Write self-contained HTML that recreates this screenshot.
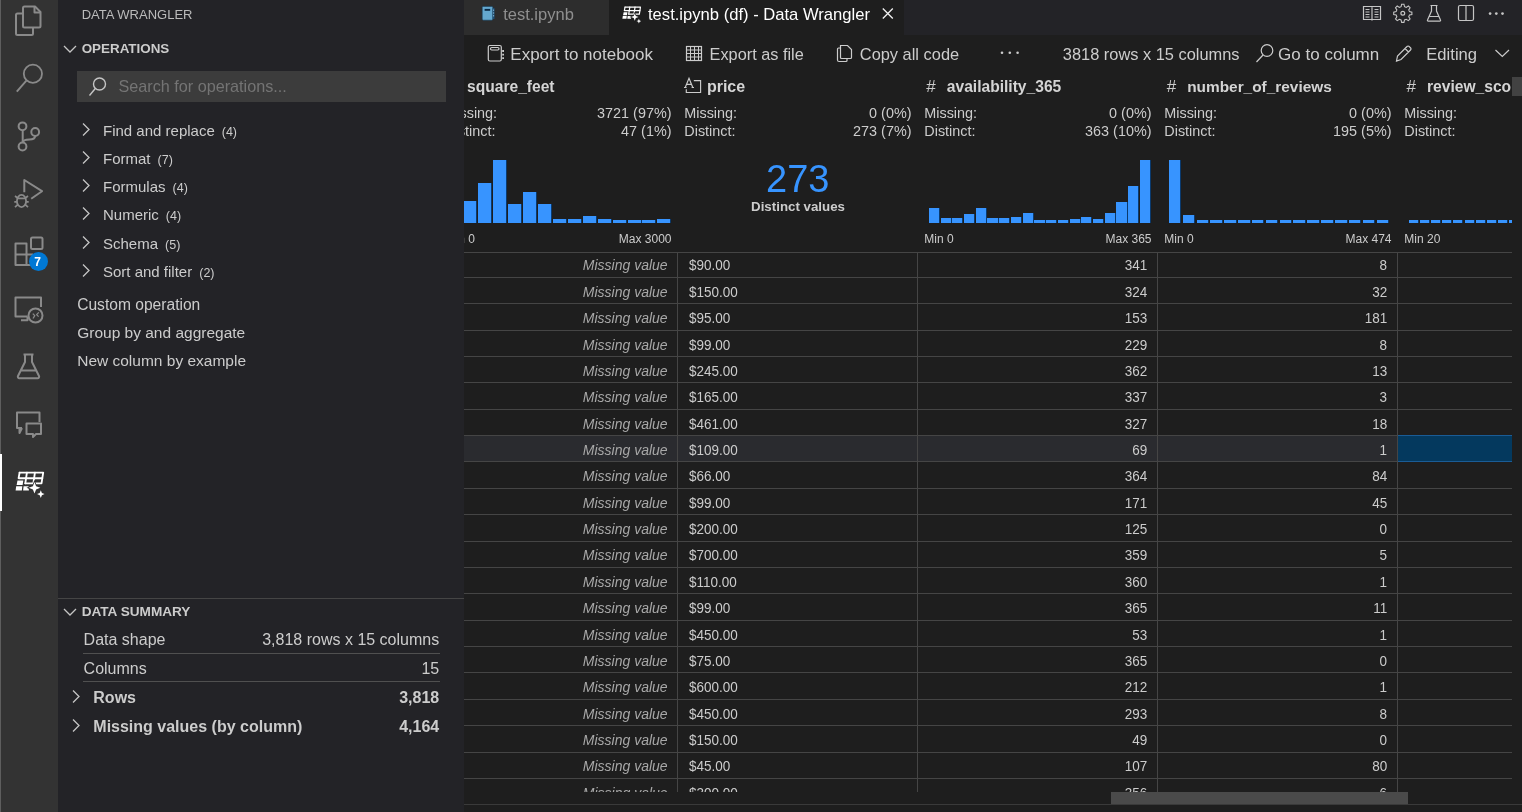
<!DOCTYPE html>
<html><head><meta charset="utf-8"><style>
html,body{margin:0;padding:0;will-change:transform;width:1522px;height:812px;overflow:hidden;background:#1e1e1e;}
.r{position:absolute;}
.t{position:absolute;white-space:nowrap;line-height:1.117;font-family:"Liberation Sans",sans-serif;}
</style></head><body>
<div class="r" style="left:0px;top:0px;width:58px;height:812px;background:#333333;"></div>
<div class="r" style="left:0px;top:0px;width:1px;height:812px;background:#5e5e5e;"></div>
<div class="r" style="left:58px;top:0px;width:406px;height:812px;background:#232327;"></div>
<div class="r" style="left:464px;top:0px;width:1058px;height:35px;background:#232327;"></div>
<div class="r" style="left:464px;top:35px;width:1058px;height:777px;background:#1e1e1e;"></div>
<svg class="r" style="left:0;top:0" width="58" height="560" viewBox="0 0 58 560" fill="none" stroke="#8a8a8a" stroke-width="2" stroke-linejoin="round">
<!-- explorer -->
<path d="M23 13.5 H17.5 a1.5 1.5 0 0 0 -1.5 1.5 V33.5 a1.5 1.5 0 0 0 1.5 1.5 H31.5 a1.5 1.5 0 0 0 1.5 -1.5 V27.5"/>
<path d="M24.5 6.5 H35 L40.5 12 V26 a1.5 1.5 0 0 1 -1.5 1.5 H24.5 a1.5 1.5 0 0 1 -1.5 -1.5 V8 a1.5 1.5 0 0 1 1.5 -1.5 Z"/>
<path d="M34.5 6.5 V12.5 H40.5"/>
<!-- search -->
<circle cx="32.9" cy="73.8" r="9.1" stroke-width="1.8"/>
<path d="M26.4 80.6 L16.8 91.6" stroke-width="1.9"/>
<!-- source control -->
<circle cx="22.5" cy="126.3" r="3.9"/>
<circle cx="35.2" cy="132" r="3.9"/>
<circle cx="22.5" cy="146.5" r="3.9"/>
<path d="M22.7 130.2 V142.6"/>
<path d="M35.2 135.9 C35 139 33 139.6 29.5 139.6 C25.5 139.6 23 140.2 22.7 142.6"/>
<!-- run & debug -->
<path d="M24.3 192.3 V180 L42 191.2 L31.2 198.8"/>
<ellipse cx="21.5" cy="201" rx="4.6" ry="6.1" stroke-width="1.8"/>
<path d="M17 198.3 H26 M15 196 L17.6 198 M28 196 L25.4 198 M14.3 201.8 H16.9 M26.1 201.8 H28.7 M15 207.2 L17.8 204.6 M28 207.2 L25.2 204.6" stroke-width="1.7"/>
<!-- extensions -->
<path d="M15.5 243.5 H26.5 V265 H15.5 Z M15.5 254.5 H33 M26.5 254.5 V265 H33"/>
<rect x="31" y="237.5" width="11.5" height="11.5" rx="1.5"/>
<!-- remote explorer -->
<path d="M27.5 316.6 H15.5 V297.5 H41 V307"/>
<path d="M21 320.3 H27.5 V316.6"/>
<circle cx="35.5" cy="315.5" r="7"/>
<path d="M32.8 313.6 L34.8 315.6 L33 318.5 M38.8 312.4 L36.6 314.6 L38.6 316.6" stroke-width="1.3"/>
<!-- testing flask -->
<path d="M23.5 354.5 H33.5 M25 354.5 V362 L18 376 a1.5 1.5 0 0 0 1.3 2.2 H37.7 a1.5 1.5 0 0 0 1.3 -2.2 L32 362 V354.5 M21 370.5 H36"/>
<!-- chat -->
<path d="M22 428 H17 V412.5 H39.5 V422 M19.5 428 V433 L22 428"/>
<path d="M26.5 423.5 H41 V434 H36 L33 437 V434 H26.5 Z"/>
</svg>
<div class="r" style="left:29px;top:252px;width:19px;height:19px;border-radius:50%;background:#0078d4;"></div>
<div class="t" style="left:34.30px;top:256px;font-size:12px;color:#ffffff;font-weight:700;font-style:normal;">7</div>
<div class="r" style="left:0px;top:454px;width:2px;height:57px;background:#ffffff;"></div>
<svg class="r" style="left:14.5px;top:470.5px" width="30.00" height="28.00" viewBox="0 0 30 28">
<g fill="none" stroke="#ffffff" stroke-width="1.85" stroke-linejoin="round" stroke-linecap="round">
<path d="M4.6 1.6 H28.2 L26.5 12.3 H10.3"/>
<path d="M4.6 1.6 L3.6 7.2 H27.3"/>
<path d="M11.9 1.6 L10.3 12.3 M19.9 1.6 L18.4 12.3"/>
</g>
<g fill="#ffffff">
<path d="M2.5 9.4 H8.3 L7.6 14 H1.6 Z"/>
<path d="M1.2 15.2 H7.3 L6.8 19.6 H0.6 Z"/>
<path d="M8.6 15.2 H13.5 L13.9 19.6 H8.1 Z"/>
</g>
<g fill="#ffffff" stroke="#333333" stroke-width="1.6" paint-order="stroke">
<path d="M19.5 11 L21.1 15.2 L25.3 16.8 L21.1 18.4 L19.5 22.6 L17.9 18.4 L13.7 16.8 L17.9 15.2 Z"/>
<path d="M25.8 19.3 L26.9 22 L29.6 23.1 L26.9 24.2 L25.8 26.9 L24.7 24.2 L22 23.1 L24.7 22 Z"/>
</g></svg>
<div class="t" style="left:81.70px;top:8px;font-size:13px;color:#bbbbbb;font-weight:400;font-style:normal;">DATA WRANGLER</div>
<svg class="r" style="left:62px;top:43px" width="16" height="12" viewBox="0 0 16 12"><path d="M2 3 L8 9 L14 3" fill="none" stroke="#c5c5c5" stroke-width="1.3"/></svg>
<div class="t" style="left:81.70px;top:42px;font-size:13.4px;color:#cccccc;font-weight:700;font-style:normal;">OPERATIONS</div>
<div class="r" style="left:77px;top:71px;width:369px;height:31px;background:#3c3c3c;"></div>
<svg class="r" style="left:88px;top:76px" width="20" height="21" viewBox="0 0 20 21"><circle cx="11.5" cy="8" r="6" fill="none" stroke="#c5c5c5" stroke-width="1.4"/><path d="M7.3 12.5 L1.5 19.5" stroke="#c5c5c5" stroke-width="1.4"/></svg>
<div class="t" style="left:118.50px;top:77px;font-size:16.2px;color:#747474;font-weight:400;font-style:normal;">Search for operations...</div>
<svg class="r" style="left:80px;top:121.3px" width="12" height="16" viewBox="0 0 12 16"><path d="M3 2.5 L9 8.5 L3 14.5" fill="none" stroke="#c5c5c5" stroke-width="1.3"/></svg>
<div class="t" style="left:103px;top:123px;font-size:15px;color:#cccccc;">Find and replace<span style="font-size:12.5px;margin-left:7px">(4)</span></div>
<svg class="r" style="left:80px;top:149.2px" width="12" height="16" viewBox="0 0 12 16"><path d="M3 2.5 L9 8.5 L3 14.5" fill="none" stroke="#c5c5c5" stroke-width="1.3"/></svg>
<div class="t" style="left:103px;top:151px;font-size:15px;color:#cccccc;">Format<span style="font-size:12.5px;margin-left:7px">(7)</span></div>
<svg class="r" style="left:80px;top:177.2px" width="12" height="16" viewBox="0 0 12 16"><path d="M3 2.5 L9 8.5 L3 14.5" fill="none" stroke="#c5c5c5" stroke-width="1.3"/></svg>
<div class="t" style="left:103px;top:179px;font-size:15px;color:#cccccc;">Formulas<span style="font-size:12.5px;margin-left:7px">(4)</span></div>
<svg class="r" style="left:80px;top:205.4px" width="12" height="16" viewBox="0 0 12 16"><path d="M3 2.5 L9 8.5 L3 14.5" fill="none" stroke="#c5c5c5" stroke-width="1.3"/></svg>
<div class="t" style="left:103px;top:207px;font-size:15px;color:#cccccc;">Numeric<span style="font-size:12.5px;margin-left:7px">(4)</span></div>
<svg class="r" style="left:80px;top:233.6px" width="12" height="16" viewBox="0 0 12 16"><path d="M3 2.5 L9 8.5 L3 14.5" fill="none" stroke="#c5c5c5" stroke-width="1.3"/></svg>
<div class="t" style="left:103px;top:236px;font-size:15px;color:#cccccc;">Schema<span style="font-size:12.5px;margin-left:7px">(5)</span></div>
<svg class="r" style="left:80px;top:262.2px" width="12" height="16" viewBox="0 0 12 16"><path d="M3 2.5 L9 8.5 L3 14.5" fill="none" stroke="#c5c5c5" stroke-width="1.3"/></svg>
<div class="t" style="left:103px;top:264px;font-size:15px;color:#cccccc;">Sort and filter<span style="font-size:12.5px;margin-left:7px">(2)</span></div>
<div class="t" style="left:77.20px;top:296px;font-size:15.6px;color:#cccccc;font-weight:400;font-style:normal;">Custom operation</div>
<div class="t" style="left:77.20px;top:324px;font-size:15.5px;color:#cccccc;font-weight:400;font-style:normal;">Group by and aggregate</div>
<div class="t" style="left:77.20px;top:352px;font-size:15.5px;color:#cccccc;font-weight:400;font-style:normal;">New column by example</div>
<div class="r" style="left:58px;top:598px;width:406px;height:1px;background:#454545;"></div>
<svg class="r" style="left:62px;top:606px" width="16" height="12" viewBox="0 0 16 12"><path d="M2 3 L8 9 L14 3" fill="none" stroke="#c5c5c5" stroke-width="1.3"/></svg>
<div class="t" style="left:81.70px;top:604px;font-size:13.6px;color:#cccccc;font-weight:700;font-style:normal;">DATA SUMMARY</div>
<div class="t" style="left:83.60px;top:631px;font-size:16px;color:#cccccc;font-weight:400;font-style:normal;">Data shape</div>
<div class="t" style="right:1082.80px;top:631px;font-size:16px;color:#cccccc;font-weight:400;font-style:normal;">3,818 rows x 15 columns</div>
<div class="r" style="left:83px;top:653px;width:357px;height:1px;background:#505050;"></div>
<div class="t" style="left:83.60px;top:660px;font-size:16px;color:#cccccc;font-weight:400;font-style:normal;">Columns</div>
<div class="t" style="right:1082.80px;top:660px;font-size:16px;color:#cccccc;font-weight:400;font-style:normal;">15</div>
<div class="r" style="left:83px;top:681px;width:357px;height:1px;background:#505050;"></div>
<svg class="r" style="left:70px;top:688.0px" width="12" height="16" viewBox="0 0 12 16"><path d="M3 2.5 L9 8.5 L3 14.5" fill="none" stroke="#c5c5c5" stroke-width="1.3"/></svg>
<div class="t" style="left:93.30px;top:689px;font-size:16px;color:#cccccc;font-weight:700;font-style:normal;">Rows</div>
<div class="t" style="right:1082.80px;top:689px;font-size:16px;color:#cccccc;font-weight:700;font-style:normal;">3,818</div>
<svg class="r" style="left:70px;top:716.5px" width="12" height="16" viewBox="0 0 12 16"><path d="M3 2.5 L9 8.5 L3 14.5" fill="none" stroke="#c5c5c5" stroke-width="1.3"/></svg>
<div class="t" style="left:93.30px;top:718px;font-size:16px;color:#cccccc;font-weight:700;font-style:normal;">Missing values (by column)</div>
<div class="t" style="right:1082.80px;top:718px;font-size:16px;color:#cccccc;font-weight:700;font-style:normal;">4,164</div>
<div class="r" style="left:464px;top:0px;width:145px;height:35px;background:#2d2d2d;"></div>
<div class="r" style="left:609px;top:0px;width:295px;height:35px;background:#1e1e1e;"></div>
<svg class="r" style="left:480px;top:4px" width="18" height="19" viewBox="480 4 18 19"><rect x="482.2" y="6.4" width="10.6" height="13.8" rx="1.2" fill="#64a8cf" stroke="#143a58" stroke-width="0.6"/><rect x="484.6" y="8.9" width="5.6" height="1.9" fill="#0b2a45"/><rect x="492.8" y="8" width="1.7" height="11" fill="#1d4e74"/><path d="M493.6 9.6 V10.8 M493.6 12.4 V13.6 M493.6 15.2 V16.4" stroke="#8fc3e0" stroke-width="1"/></svg>
<div class="t" style="left:503.20px;top:5px;font-size:16.5px;color:#8f8f8f;font-weight:400;font-style:normal;">test.ipynb</div>
<svg class="r" style="left:621.8px;top:5.6px" width="19.65" height="18.34" viewBox="0 0 30 28">
<g fill="none" stroke="#ffffff" stroke-width="1.85" stroke-linejoin="round" stroke-linecap="round">
<path d="M4.6 1.6 H28.2 L26.5 12.3 H10.3"/>
<path d="M4.6 1.6 L3.6 7.2 H27.3"/>
<path d="M11.9 1.6 L10.3 12.3 M19.9 1.6 L18.4 12.3"/>
</g>
<g fill="#ffffff">
<path d="M2.5 9.4 H8.3 L7.6 14 H1.6 Z"/>
<path d="M1.2 15.2 H7.3 L6.8 19.6 H0.6 Z"/>
<path d="M8.6 15.2 H13.5 L13.9 19.6 H8.1 Z"/>
</g>
<g fill="#ffffff" stroke="#1e1e1e" stroke-width="1.6" paint-order="stroke">
<path d="M19.5 11 L21.1 15.2 L25.3 16.8 L21.1 18.4 L19.5 22.6 L17.9 18.4 L13.7 16.8 L17.9 15.2 Z"/>
<path d="M25.8 19.3 L26.9 22 L29.6 23.1 L26.9 24.2 L25.8 26.9 L24.7 24.2 L22 23.1 L24.7 22 Z"/>
</g></svg>
<div class="t" style="left:648.00px;top:6px;font-size:16.6px;color:#ffffff;font-weight:400;font-style:normal;">test.ipynb (df) - Data Wrangler</div>
<svg class="r" style="left:881px;top:7px" width="13" height="13" viewBox="0 0 13 13"><path d="M1.8 1.5 L11.8 11.5 M11.8 1.5 L1.8 11.5" stroke="#f0f0f0" stroke-width="1.3"/></svg>
<svg class="r" style="left:1360px;top:3px" width="150" height="22" viewBox="1360 3 150 22" fill="none" stroke="#c5c5c5" stroke-width="1.2">
<path d="M1363.5 6.5 H1371.5 L1372 7 L1372.5 6.5 H1380.5 V19.5 H1372.5 L1372 20 L1371.5 19.5 H1363.5 Z M1372 7 V19.5"/>
<path d="M1365.5 9.5 H1369.5 M1365.5 12 H1369.5 M1365.5 14.5 H1369.5 M1365.5 17 H1369.5 M1374.5 9.5 H1378.5 M1374.5 12 H1378.5 M1374.5 14.5 H1378.5 M1374.5 17 H1378.5" stroke-width="1"/>
<circle cx="1402.8" cy="13.3" r="1.9"/>
<path d="M1401.5 4.5 H1404.1 L1404.7 7.2 L1406.6 8 L1409 6.5 L1410.9 8.4 L1409.4 10.8 L1410.2 12.7 L1412.9 13.3 V15.9 L1410.2 16.5 L1409.4 18.4 L1410.9 20.8 L1409 22.7 L1406.6 21.2 L1404.7 22 L1404.1 24.7 H1401.5 L1400.9 22 L1399 21.2 L1396.6 22.7 L1394.7 20.8 L1396.2 18.4 L1395.4 16.5 L1392.7 15.9 V13.3 L1395.4 12.7 L1396.2 10.8 L1394.7 8.4 L1396.6 6.5 L1399 8 L1400.9 7.2 Z" transform="translate(1402.8 13.3) scale(0.9) translate(-1402.8 -14.6)"/>
<path d="M1430.5 5.5 H1437.5 M1431.5 5.5 V11 L1427.5 20 a0.8 0.8 0 0 0 0.7 1.2 H1439.8 a0.8 0.8 0 0 0 0.7 -1.2 L1436.5 11 V5.5 M1429.5 16.5 H1438.5"/>
<rect x="1458.5" y="5.5" width="15" height="15" rx="1.5"/>
<path d="M1466 5.5 V20.5"/>
</svg>
<svg class="r" style="left:1480px;top:5px" width="30" height="20" viewBox="1480 5 30 20" fill="#c5c5c5"><circle cx="1490.1" cy="13.6" r="1.35"/><circle cx="1496.3" cy="13.6" r="1.35"/><circle cx="1502.5" cy="13.6" r="1.35"/></svg>
<svg class="r" style="left:480px;top:40px" width="1050" height="30" viewBox="480 40 1050 30" fill="none" stroke="#cccccc" stroke-width="1.2">
<rect x="488.3" y="45.5" width="13" height="15.5" rx="1.5"/>
<rect x="490.5" y="47.5" width="8.5" height="2.5" rx="1.2"/>
<path d="M503.1 50.1 V51.9 M503.1 53.8 V55.6 M503.1 57.3 V59.1" stroke-width="1.8"/>
<rect x="686.5" y="46.5" width="15" height="14"/>
<path d="M686.5 50 H701.5 M686.5 53.5 H701.5 M686.5 57 H701.5 M690.5 46.5 V60.5 M694.5 46.5 V60.5 M698.5 46.5 V60.5" stroke-width="1"/>
<path d="M840.5 48 H838.5 a1 1 0 0 0 -1 1 V60 a1.5 1.5 0 0 0 1.5 1.5 H846 a1 1 0 0 0 1 -1 V59"/>
<path d="M840.5 45.5 H847.5 L851.5 49.5 V57.5 a1 1 0 0 1 -1 1 H841.5 a1 1 0 0 1 -1 -1 Z"/>
<circle cx="1267" cy="50.5" r="5.8"/>
<path d="M1263 55 L1256.5 62"/>
<path d="M1396.5 61 L1397.5 56 L1407 46.5 a1.5 1.5 0 0 1 2.2 0 L1410.5 47.8 a1.5 1.5 0 0 1 0 2.2 L1401 59.5 Z M1405 48.5 L1408.5 52"/>
<path d="M1495.5 50 L1502.3 56.5 L1509 50"/>
</svg>
<svg class="r" style="left:995px;top:45px" width="30" height="15" viewBox="995 45 30 15" fill="#cccccc"><circle cx="1002" cy="52.7" r="1.3"/><circle cx="1009.8" cy="52.7" r="1.3"/><circle cx="1017.6" cy="52.7" r="1.3"/></svg>
<div class="t" style="left:510.30px;top:45px;font-size:17px;color:#cccccc;font-weight:400;font-style:normal;">Export to notebook</div>
<div class="t" style="left:709.60px;top:45px;font-size:16.3px;color:#cccccc;font-weight:400;font-style:normal;">Export as file</div>
<div class="t" style="left:859.80px;top:45px;font-size:16.4px;color:#cccccc;font-weight:400;font-style:normal;">Copy all code</div>
<div class="t" style="left:1062.80px;top:45px;font-size:16.4px;color:#cccccc;font-weight:400;font-style:normal;">3818 rows x 15 columns</div>
<div class="t" style="left:1278.10px;top:45px;font-size:17px;color:#cccccc;font-weight:400;font-style:normal;">Go to column</div>
<div class="t" style="left:1426.30px;top:46px;font-size:16.6px;color:#cccccc;font-weight:400;font-style:normal;">Editing</div>
<div class="r" style="left:464px;top:70px;width:1058px;height:742px;overflow:hidden">
<div class="t" style="left:3.00px;top:8px;font-size:15.6px;color:#d4d4d4;font-weight:700;font-style:normal;">square_feet</div>
<div class="t" style="left:242.90px;top:8px;font-size:16px;color:#d4d4d4;font-weight:700;font-style:normal;">price</div>
<div class="t" style="left:482.80px;top:8px;font-size:15.6px;color:#d4d4d4;font-weight:700;font-style:normal;">availability_365</div>
<div class="t" style="left:723.20px;top:8px;font-size:15.4px;color:#d4d4d4;font-weight:700;font-style:normal;">number_of_reviews</div>
<div class="t" style="left:963.00px;top:8px;font-size:15.6px;color:#d4d4d4;font-weight:700;font-style:normal;">review_scores_rating</div>
<div class="t" style="left:462.30px;top:7px;font-size:17px;color:#cccccc;font-weight:400;font-style:normal;">#</div>
<div class="t" style="left:702.70px;top:7px;font-size:17px;color:#cccccc;font-weight:400;font-style:normal;">#</div>
<div class="t" style="left:942.40px;top:7px;font-size:17px;color:#cccccc;font-weight:400;font-style:normal;">#</div>
<svg class="r" style="left:216px;top:4px" width="24" height="22" viewBox="680 74 24 22" fill="none" stroke="#cccccc" stroke-width="1.15">
<path d="M685.2 87.5 L689 78.3 L692.8 87.5 M686.6 84.3 H691.4 M684 87.5 H686.6 M691.6 87.5 H694"/>
<path d="M693.8 80.6 H700.6 V92.5 H686.3 V89.3"/>
</svg>
<div class="t" style="left:-19.70px;top:35px;font-size:14.4px;color:#cccccc;font-weight:400;font-style:normal;">Missing:</div>
<div class="t" style="left:-19.70px;top:53px;font-size:14.4px;color:#cccccc;font-weight:400;font-style:normal;">Distinct:</div>
<div class="t" style="right:850.50px;top:35px;font-size:14.4px;color:#cccccc;font-weight:400;font-style:normal;">3721 (97%)</div>
<div class="t" style="right:850.50px;top:53px;font-size:14.4px;color:#cccccc;font-weight:400;font-style:normal;">47 (1%)</div>
<div class="t" style="left:220.30px;top:35px;font-size:14.4px;color:#cccccc;font-weight:400;font-style:normal;">Missing:</div>
<div class="t" style="left:220.30px;top:53px;font-size:14.4px;color:#cccccc;font-weight:400;font-style:normal;">Distinct:</div>
<div class="t" style="right:610.50px;top:35px;font-size:14.4px;color:#cccccc;font-weight:400;font-style:normal;">0 (0%)</div>
<div class="t" style="right:610.50px;top:53px;font-size:14.4px;color:#cccccc;font-weight:400;font-style:normal;">273 (7%)</div>
<div class="t" style="left:460.30px;top:35px;font-size:14.4px;color:#cccccc;font-weight:400;font-style:normal;">Missing:</div>
<div class="t" style="left:460.30px;top:53px;font-size:14.4px;color:#cccccc;font-weight:400;font-style:normal;">Distinct:</div>
<div class="t" style="right:370.50px;top:35px;font-size:14.4px;color:#cccccc;font-weight:400;font-style:normal;">0 (0%)</div>
<div class="t" style="right:370.50px;top:53px;font-size:14.4px;color:#cccccc;font-weight:400;font-style:normal;">363 (10%)</div>
<div class="t" style="left:700.30px;top:35px;font-size:14.4px;color:#cccccc;font-weight:400;font-style:normal;">Missing:</div>
<div class="t" style="left:700.30px;top:53px;font-size:14.4px;color:#cccccc;font-weight:400;font-style:normal;">Distinct:</div>
<div class="t" style="right:130.50px;top:35px;font-size:14.4px;color:#cccccc;font-weight:400;font-style:normal;">0 (0%)</div>
<div class="t" style="right:130.50px;top:53px;font-size:14.4px;color:#cccccc;font-weight:400;font-style:normal;">195 (5%)</div>
<div class="t" style="left:940.30px;top:35px;font-size:14.4px;color:#cccccc;font-weight:400;font-style:normal;">Missing:</div>
<div class="t" style="left:940.30px;top:53px;font-size:14.4px;color:#cccccc;font-weight:400;font-style:normal;">Distinct:</div>
<div class="t" style="left:333.80px;top:88px;font-size:38px;color:#3794ff;font-weight:400;font-style:normal;transform:translateX(-50%);">273</div>
<div class="t" style="left:334.00px;top:130px;font-size:13.3px;color:#cccccc;font-weight:700;font-style:normal;transform:translateX(-50%);">Distinct values</div>
<div class="t" style="left:-18.30px;top:163px;font-size:12px;color:#cccccc;font-weight:400;font-style:normal;">Min 0</div>
<div class="t" style="right:850.50px;top:163px;font-size:12px;color:#cccccc;font-weight:400;font-style:normal;">Max 3000</div>
<div class="t" style="left:460.30px;top:163px;font-size:12px;color:#cccccc;font-weight:400;font-style:normal;">Min 0</div>
<div class="t" style="right:370.50px;top:163px;font-size:12px;color:#cccccc;font-weight:400;font-style:normal;">Max 365</div>
<div class="t" style="left:700.30px;top:163px;font-size:12px;color:#cccccc;font-weight:400;font-style:normal;">Min 0</div>
<div class="t" style="right:130.50px;top:163px;font-size:12px;color:#cccccc;font-weight:400;font-style:normal;">Max 474</div>
<div class="t" style="left:940.30px;top:163px;font-size:12px;color:#cccccc;font-weight:400;font-style:normal;">Min 20</div>
<div class="r" style="left:-15.62px;top:149.40px;width:13.00px;height:3.90px;background:#3794ff;box-shadow:1px 0 0 #0a3a6e"></div>
<div class="r" style="left:-0.69px;top:131.30px;width:13.00px;height:22.00px;background:#3794ff;box-shadow:1px 0 0 #0a3a6e"></div>
<div class="r" style="left:14.24px;top:113.20px;width:13.00px;height:40.10px;background:#3794ff;box-shadow:1px 0 0 #0a3a6e"></div>
<div class="r" style="left:29.17px;top:90.10px;width:13.00px;height:63.20px;background:#3794ff;box-shadow:1px 0 0 #0a3a6e"></div>
<div class="r" style="left:44.10px;top:133.80px;width:13.00px;height:19.50px;background:#3794ff;box-shadow:1px 0 0 #0a3a6e"></div>
<div class="r" style="left:59.03px;top:121.90px;width:13.00px;height:31.40px;background:#3794ff;box-shadow:1px 0 0 #0a3a6e"></div>
<div class="r" style="left:73.96px;top:133.80px;width:13.00px;height:19.50px;background:#3794ff;box-shadow:1px 0 0 #0a3a6e"></div>
<div class="r" style="left:88.89px;top:149.40px;width:13.00px;height:3.90px;background:#3794ff;box-shadow:1px 0 0 #0a3a6e"></div>
<div class="r" style="left:103.82px;top:149.40px;width:13.00px;height:3.90px;background:#3794ff;box-shadow:1px 0 0 #0a3a6e"></div>
<div class="r" style="left:118.75px;top:145.80px;width:13.00px;height:7.50px;background:#3794ff;box-shadow:1px 0 0 #0a3a6e"></div>
<div class="r" style="left:133.68px;top:149.40px;width:13.00px;height:3.90px;background:#3794ff;box-shadow:1px 0 0 #0a3a6e"></div>
<div class="r" style="left:148.61px;top:150.10px;width:13.00px;height:3.20px;background:#3794ff;box-shadow:1px 0 0 #0a3a6e"></div>
<div class="r" style="left:163.54px;top:150.10px;width:13.00px;height:3.20px;background:#3794ff;box-shadow:1px 0 0 #0a3a6e"></div>
<div class="r" style="left:178.47px;top:150.10px;width:13.00px;height:3.20px;background:#3794ff;box-shadow:1px 0 0 #0a3a6e"></div>
<div class="r" style="left:193.40px;top:149.10px;width:13.00px;height:4.20px;background:#3794ff;box-shadow:1px 0 0 #0a3a6e"></div>
<div class="r" style="left:464.80px;top:138.30px;width:10.20px;height:15.00px;background:#3794ff;box-shadow:1px 0 0 #0a3a6e"></div>
<div class="r" style="left:476.53px;top:147.80px;width:10.20px;height:5.50px;background:#3794ff;box-shadow:1px 0 0 #0a3a6e"></div>
<div class="r" style="left:488.26px;top:147.80px;width:10.20px;height:5.50px;background:#3794ff;box-shadow:1px 0 0 #0a3a6e"></div>
<div class="r" style="left:499.99px;top:143.90px;width:10.20px;height:9.40px;background:#3794ff;box-shadow:1px 0 0 #0a3a6e"></div>
<div class="r" style="left:511.72px;top:138.30px;width:10.20px;height:15.00px;background:#3794ff;box-shadow:1px 0 0 #0a3a6e"></div>
<div class="r" style="left:523.45px;top:147.80px;width:10.20px;height:5.50px;background:#3794ff;box-shadow:1px 0 0 #0a3a6e"></div>
<div class="r" style="left:535.18px;top:147.80px;width:10.20px;height:5.50px;background:#3794ff;box-shadow:1px 0 0 #0a3a6e"></div>
<div class="r" style="left:546.91px;top:147.00px;width:10.20px;height:6.30px;background:#3794ff;box-shadow:1px 0 0 #0a3a6e"></div>
<div class="r" style="left:558.64px;top:143.10px;width:10.20px;height:10.20px;background:#3794ff;box-shadow:1px 0 0 #0a3a6e"></div>
<div class="r" style="left:570.37px;top:150.20px;width:10.20px;height:3.10px;background:#3794ff;box-shadow:1px 0 0 #0a3a6e"></div>
<div class="r" style="left:582.10px;top:150.20px;width:10.20px;height:3.10px;background:#3794ff;box-shadow:1px 0 0 #0a3a6e"></div>
<div class="r" style="left:593.83px;top:150.20px;width:10.20px;height:3.10px;background:#3794ff;box-shadow:1px 0 0 #0a3a6e"></div>
<div class="r" style="left:605.56px;top:149.10px;width:10.20px;height:4.20px;background:#3794ff;box-shadow:1px 0 0 #0a3a6e"></div>
<div class="r" style="left:617.29px;top:147.00px;width:10.20px;height:6.30px;background:#3794ff;box-shadow:1px 0 0 #0a3a6e"></div>
<div class="r" style="left:629.02px;top:149.10px;width:10.20px;height:4.20px;background:#3794ff;box-shadow:1px 0 0 #0a3a6e"></div>
<div class="r" style="left:640.75px;top:143.10px;width:10.20px;height:10.20px;background:#3794ff;box-shadow:1px 0 0 #0a3a6e"></div>
<div class="r" style="left:652.48px;top:132.30px;width:10.20px;height:21.00px;background:#3794ff;box-shadow:1px 0 0 #0a3a6e"></div>
<div class="r" style="left:664.21px;top:115.80px;width:10.20px;height:37.50px;background:#3794ff;box-shadow:1px 0 0 #0a3a6e"></div>
<div class="r" style="left:675.94px;top:90.20px;width:10.20px;height:63.10px;background:#3794ff;box-shadow:1px 0 0 #0a3a6e"></div>
<div class="r" style="left:704.80px;top:90.20px;width:11.50px;height:63.10px;background:#3794ff;box-shadow:1px 0 0 #0a3a6e"></div>
<div class="r" style="left:718.65px;top:145.40px;width:11.50px;height:7.90px;background:#3794ff;box-shadow:1px 0 0 #0a3a6e"></div>
<div class="r" style="left:732.50px;top:150.20px;width:11.50px;height:3.10px;background:#3794ff;box-shadow:1px 0 0 #0a3a6e"></div>
<div class="r" style="left:746.35px;top:150.20px;width:11.50px;height:3.10px;background:#3794ff;box-shadow:1px 0 0 #0a3a6e"></div>
<div class="r" style="left:760.20px;top:150.20px;width:11.50px;height:3.10px;background:#3794ff;box-shadow:1px 0 0 #0a3a6e"></div>
<div class="r" style="left:774.05px;top:150.20px;width:11.50px;height:3.10px;background:#3794ff;box-shadow:1px 0 0 #0a3a6e"></div>
<div class="r" style="left:787.90px;top:150.20px;width:11.50px;height:3.10px;background:#3794ff;box-shadow:1px 0 0 #0a3a6e"></div>
<div class="r" style="left:801.75px;top:150.20px;width:11.50px;height:3.10px;background:#3794ff;box-shadow:1px 0 0 #0a3a6e"></div>
<div class="r" style="left:815.60px;top:150.20px;width:11.50px;height:3.10px;background:#3794ff;box-shadow:1px 0 0 #0a3a6e"></div>
<div class="r" style="left:829.45px;top:150.20px;width:11.50px;height:3.10px;background:#3794ff;box-shadow:1px 0 0 #0a3a6e"></div>
<div class="r" style="left:843.30px;top:150.20px;width:11.50px;height:3.10px;background:#3794ff;box-shadow:1px 0 0 #0a3a6e"></div>
<div class="r" style="left:857.15px;top:150.20px;width:11.50px;height:3.10px;background:#3794ff;box-shadow:1px 0 0 #0a3a6e"></div>
<div class="r" style="left:871.00px;top:150.20px;width:11.50px;height:3.10px;background:#3794ff;box-shadow:1px 0 0 #0a3a6e"></div>
<div class="r" style="left:884.85px;top:150.20px;width:11.50px;height:3.10px;background:#3794ff;box-shadow:1px 0 0 #0a3a6e"></div>
<div class="r" style="left:898.70px;top:150.20px;width:11.50px;height:3.10px;background:#3794ff;box-shadow:1px 0 0 #0a3a6e"></div>
<div class="r" style="left:912.55px;top:150.20px;width:11.50px;height:3.10px;background:#3794ff;box-shadow:1px 0 0 #0a3a6e"></div>
<div class="r" style="left:945.00px;top:150.20px;width:9.00px;height:3.10px;background:#3794ff;box-shadow:1px 0 0 #0a3a6e"></div>
<div class="r" style="left:956.10px;top:150.20px;width:9.00px;height:3.10px;background:#3794ff;box-shadow:1px 0 0 #0a3a6e"></div>
<div class="r" style="left:967.20px;top:150.20px;width:9.00px;height:3.10px;background:#3794ff;box-shadow:1px 0 0 #0a3a6e"></div>
<div class="r" style="left:978.30px;top:150.20px;width:9.00px;height:3.10px;background:#3794ff;box-shadow:1px 0 0 #0a3a6e"></div>
<div class="r" style="left:989.40px;top:150.20px;width:9.00px;height:3.10px;background:#3794ff;box-shadow:1px 0 0 #0a3a6e"></div>
<div class="r" style="left:1000.50px;top:150.20px;width:9.00px;height:3.10px;background:#3794ff;box-shadow:1px 0 0 #0a3a6e"></div>
<div class="r" style="left:1011.60px;top:150.20px;width:9.00px;height:3.10px;background:#3794ff;box-shadow:1px 0 0 #0a3a6e"></div>
<div class="r" style="left:1022.70px;top:150.20px;width:9.00px;height:3.10px;background:#3794ff;box-shadow:1px 0 0 #0a3a6e"></div>
<div class="r" style="left:1033.80px;top:150.20px;width:9.00px;height:3.10px;background:#3794ff;box-shadow:1px 0 0 #0a3a6e"></div>
<div class="r" style="left:1044.90px;top:150.20px;width:9.00px;height:3.10px;background:#3794ff;box-shadow:1px 0 0 #0a3a6e"></div>
<div class="r" style="left:0.00px;top:182.00px;width:1048.00px;height:1.00px;background:#454545;"></div>
<div class="r" style="left:1048.00px;top:30.00px;width:10.00px;height:150.00px;background:#1e1e1e;"></div>
<div class="r" style="left:1048.00px;top:7.00px;width:10.00px;height:19.00px;background:#424242;"></div>
<div class="r" style="left:0;top:183px;width:1048px;height:539px;overflow:hidden">
<div class="t" style="right:844.40px;top:5px;font-size:14px;color:#a8a8a8;font-style:italic;">Missing value</div>
<div class="t" style="left:225.00px;top:4px;font-size:14.6px;color:#cccccc;font-style:normal;transform:scaleX(0.925);transform-origin:0 0;">$90.00</div>
<div class="t" style="right:364.50px;top:4px;font-size:14.6px;color:#cccccc;font-style:normal;transform:scaleX(0.925);transform-origin:100% 0;">341</div>
<div class="t" style="right:124.50px;top:4px;font-size:14.6px;color:#cccccc;font-style:normal;transform:scaleX(0.925);transform-origin:100% 0;">8</div>
<div class="r" style="left:0.00px;top:24.00px;width:1048.00px;height:1.00px;background:#454545;"></div>
<div class="t" style="right:844.40px;top:32px;font-size:14px;color:#a8a8a8;font-style:italic;">Missing value</div>
<div class="t" style="left:225.00px;top:31px;font-size:14.6px;color:#cccccc;font-style:normal;transform:scaleX(0.925);transform-origin:0 0;">$150.00</div>
<div class="t" style="right:364.50px;top:31px;font-size:14.6px;color:#cccccc;font-style:normal;transform:scaleX(0.925);transform-origin:100% 0;">324</div>
<div class="t" style="right:124.50px;top:31px;font-size:14.6px;color:#cccccc;font-style:normal;transform:scaleX(0.925);transform-origin:100% 0;">32</div>
<div class="r" style="left:0.00px;top:50.00px;width:1048.00px;height:1.00px;background:#454545;"></div>
<div class="t" style="right:844.40px;top:58px;font-size:14px;color:#a8a8a8;font-style:italic;">Missing value</div>
<div class="t" style="left:225.00px;top:57px;font-size:14.6px;color:#cccccc;font-style:normal;transform:scaleX(0.925);transform-origin:0 0;">$95.00</div>
<div class="t" style="right:364.50px;top:57px;font-size:14.6px;color:#cccccc;font-style:normal;transform:scaleX(0.925);transform-origin:100% 0;">153</div>
<div class="t" style="right:124.50px;top:57px;font-size:14.6px;color:#cccccc;font-style:normal;transform:scaleX(0.925);transform-origin:100% 0;">181</div>
<div class="r" style="left:0.00px;top:77.00px;width:1048.00px;height:1.00px;background:#454545;"></div>
<div class="t" style="right:844.40px;top:85px;font-size:14px;color:#a8a8a8;font-style:italic;">Missing value</div>
<div class="t" style="left:225.00px;top:84px;font-size:14.6px;color:#cccccc;font-style:normal;transform:scaleX(0.925);transform-origin:0 0;">$99.00</div>
<div class="t" style="right:364.50px;top:84px;font-size:14.6px;color:#cccccc;font-style:normal;transform:scaleX(0.925);transform-origin:100% 0;">229</div>
<div class="t" style="right:124.50px;top:84px;font-size:14.6px;color:#cccccc;font-style:normal;transform:scaleX(0.925);transform-origin:100% 0;">8</div>
<div class="r" style="left:0.00px;top:103.00px;width:1048.00px;height:1.00px;background:#454545;"></div>
<div class="t" style="right:844.40px;top:111px;font-size:14px;color:#a8a8a8;font-style:italic;">Missing value</div>
<div class="t" style="left:225.00px;top:110px;font-size:14.6px;color:#cccccc;font-style:normal;transform:scaleX(0.925);transform-origin:0 0;">$245.00</div>
<div class="t" style="right:364.50px;top:110px;font-size:14.6px;color:#cccccc;font-style:normal;transform:scaleX(0.925);transform-origin:100% 0;">362</div>
<div class="t" style="right:124.50px;top:110px;font-size:14.6px;color:#cccccc;font-style:normal;transform:scaleX(0.925);transform-origin:100% 0;">13</div>
<div class="r" style="left:0.00px;top:129.00px;width:1048.00px;height:1.00px;background:#454545;"></div>
<div class="t" style="right:844.40px;top:137px;font-size:14px;color:#a8a8a8;font-style:italic;">Missing value</div>
<div class="t" style="left:225.00px;top:136px;font-size:14.6px;color:#cccccc;font-style:normal;transform:scaleX(0.925);transform-origin:0 0;">$165.00</div>
<div class="t" style="right:364.50px;top:136px;font-size:14.6px;color:#cccccc;font-style:normal;transform:scaleX(0.925);transform-origin:100% 0;">337</div>
<div class="t" style="right:124.50px;top:136px;font-size:14.6px;color:#cccccc;font-style:normal;transform:scaleX(0.925);transform-origin:100% 0;">3</div>
<div class="r" style="left:0.00px;top:156.00px;width:1048.00px;height:1.00px;background:#454545;"></div>
<div class="t" style="right:844.40px;top:164px;font-size:14px;color:#a8a8a8;font-style:italic;">Missing value</div>
<div class="t" style="left:225.00px;top:163px;font-size:14.6px;color:#cccccc;font-style:normal;transform:scaleX(0.925);transform-origin:0 0;">$461.00</div>
<div class="t" style="right:364.50px;top:163px;font-size:14.6px;color:#cccccc;font-style:normal;transform:scaleX(0.925);transform-origin:100% 0;">327</div>
<div class="t" style="right:124.50px;top:163px;font-size:14.6px;color:#cccccc;font-style:normal;transform:scaleX(0.925);transform-origin:100% 0;">18</div>
<div class="r" style="left:0.00px;top:182.00px;width:1048.00px;height:1.00px;background:#454545;"></div>
<div class="r" style="left:0.00px;top:183.00px;width:933.00px;height:25.00px;background:#2a2b2f;"></div>
<div class="r" style="left:934.00px;top:182.00px;width:114.00px;height:27.00px;background:#04395e;border-top:1px solid #1a5c96;border-bottom:1px solid #1a5c96;box-sizing:border-box"></div>
<div class="t" style="right:844.40px;top:190px;font-size:14px;color:#a8a8a8;font-style:italic;">Missing value</div>
<div class="t" style="left:225.00px;top:189px;font-size:14.6px;color:#cccccc;font-style:normal;transform:scaleX(0.925);transform-origin:0 0;">$109.00</div>
<div class="t" style="right:364.50px;top:189px;font-size:14.6px;color:#cccccc;font-style:normal;transform:scaleX(0.925);transform-origin:100% 0;">69</div>
<div class="t" style="right:124.50px;top:189px;font-size:14.6px;color:#cccccc;font-style:normal;transform:scaleX(0.925);transform-origin:100% 0;">1</div>
<div class="r" style="left:0.00px;top:208.00px;width:1048.00px;height:1.00px;background:#454545;"></div>
<div class="t" style="right:844.40px;top:216px;font-size:14px;color:#a8a8a8;font-style:italic;">Missing value</div>
<div class="t" style="left:225.00px;top:215px;font-size:14.6px;color:#cccccc;font-style:normal;transform:scaleX(0.925);transform-origin:0 0;">$66.00</div>
<div class="t" style="right:364.50px;top:215px;font-size:14.6px;color:#cccccc;font-style:normal;transform:scaleX(0.925);transform-origin:100% 0;">364</div>
<div class="t" style="right:124.50px;top:215px;font-size:14.6px;color:#cccccc;font-style:normal;transform:scaleX(0.925);transform-origin:100% 0;">84</div>
<div class="r" style="left:0.00px;top:235.00px;width:1048.00px;height:1.00px;background:#454545;"></div>
<div class="t" style="right:844.40px;top:243px;font-size:14px;color:#a8a8a8;font-style:italic;">Missing value</div>
<div class="t" style="left:225.00px;top:242px;font-size:14.6px;color:#cccccc;font-style:normal;transform:scaleX(0.925);transform-origin:0 0;">$99.00</div>
<div class="t" style="right:364.50px;top:242px;font-size:14.6px;color:#cccccc;font-style:normal;transform:scaleX(0.925);transform-origin:100% 0;">171</div>
<div class="t" style="right:124.50px;top:242px;font-size:14.6px;color:#cccccc;font-style:normal;transform:scaleX(0.925);transform-origin:100% 0;">45</div>
<div class="r" style="left:0.00px;top:261.00px;width:1048.00px;height:1.00px;background:#454545;"></div>
<div class="t" style="right:844.40px;top:269px;font-size:14px;color:#a8a8a8;font-style:italic;">Missing value</div>
<div class="t" style="left:225.00px;top:268px;font-size:14.6px;color:#cccccc;font-style:normal;transform:scaleX(0.925);transform-origin:0 0;">$200.00</div>
<div class="t" style="right:364.50px;top:268px;font-size:14.6px;color:#cccccc;font-style:normal;transform:scaleX(0.925);transform-origin:100% 0;">125</div>
<div class="t" style="right:124.50px;top:268px;font-size:14.6px;color:#cccccc;font-style:normal;transform:scaleX(0.925);transform-origin:100% 0;">0</div>
<div class="r" style="left:0.00px;top:288.00px;width:1048.00px;height:1.00px;background:#454545;"></div>
<div class="t" style="right:844.40px;top:295px;font-size:14px;color:#a8a8a8;font-style:italic;">Missing value</div>
<div class="t" style="left:225.00px;top:294px;font-size:14.6px;color:#cccccc;font-style:normal;transform:scaleX(0.925);transform-origin:0 0;">$700.00</div>
<div class="t" style="right:364.50px;top:294px;font-size:14.6px;color:#cccccc;font-style:normal;transform:scaleX(0.925);transform-origin:100% 0;">359</div>
<div class="t" style="right:124.50px;top:294px;font-size:14.6px;color:#cccccc;font-style:normal;transform:scaleX(0.925);transform-origin:100% 0;">5</div>
<div class="r" style="left:0.00px;top:314.00px;width:1048.00px;height:1.00px;background:#454545;"></div>
<div class="t" style="right:844.40px;top:322px;font-size:14px;color:#a8a8a8;font-style:italic;">Missing value</div>
<div class="t" style="left:225.00px;top:321px;font-size:14.6px;color:#cccccc;font-style:normal;transform:scaleX(0.925);transform-origin:0 0;">$110.00</div>
<div class="t" style="right:364.50px;top:321px;font-size:14.6px;color:#cccccc;font-style:normal;transform:scaleX(0.925);transform-origin:100% 0;">360</div>
<div class="t" style="right:124.50px;top:321px;font-size:14.6px;color:#cccccc;font-style:normal;transform:scaleX(0.925);transform-origin:100% 0;">1</div>
<div class="r" style="left:0.00px;top:340.00px;width:1048.00px;height:1.00px;background:#454545;"></div>
<div class="t" style="right:844.40px;top:348px;font-size:14px;color:#a8a8a8;font-style:italic;">Missing value</div>
<div class="t" style="left:225.00px;top:347px;font-size:14.6px;color:#cccccc;font-style:normal;transform:scaleX(0.925);transform-origin:0 0;">$99.00</div>
<div class="t" style="right:364.50px;top:347px;font-size:14.6px;color:#cccccc;font-style:normal;transform:scaleX(0.925);transform-origin:100% 0;">365</div>
<div class="t" style="right:124.50px;top:347px;font-size:14.6px;color:#cccccc;font-style:normal;transform:scaleX(0.925);transform-origin:100% 0;">11</div>
<div class="r" style="left:0.00px;top:367.00px;width:1048.00px;height:1.00px;background:#454545;"></div>
<div class="t" style="right:844.40px;top:375px;font-size:14px;color:#a8a8a8;font-style:italic;">Missing value</div>
<div class="t" style="left:225.00px;top:374px;font-size:14.6px;color:#cccccc;font-style:normal;transform:scaleX(0.925);transform-origin:0 0;">$450.00</div>
<div class="t" style="right:364.50px;top:374px;font-size:14.6px;color:#cccccc;font-style:normal;transform:scaleX(0.925);transform-origin:100% 0;">53</div>
<div class="t" style="right:124.50px;top:374px;font-size:14.6px;color:#cccccc;font-style:normal;transform:scaleX(0.925);transform-origin:100% 0;">1</div>
<div class="r" style="left:0.00px;top:393.00px;width:1048.00px;height:1.00px;background:#454545;"></div>
<div class="t" style="right:844.40px;top:401px;font-size:14px;color:#a8a8a8;font-style:italic;">Missing value</div>
<div class="t" style="left:225.00px;top:400px;font-size:14.6px;color:#cccccc;font-style:normal;transform:scaleX(0.925);transform-origin:0 0;">$75.00</div>
<div class="t" style="right:364.50px;top:400px;font-size:14.6px;color:#cccccc;font-style:normal;transform:scaleX(0.925);transform-origin:100% 0;">365</div>
<div class="t" style="right:124.50px;top:400px;font-size:14.6px;color:#cccccc;font-style:normal;transform:scaleX(0.925);transform-origin:100% 0;">0</div>
<div class="r" style="left:0.00px;top:419.00px;width:1048.00px;height:1.00px;background:#454545;"></div>
<div class="t" style="right:844.40px;top:427px;font-size:14px;color:#a8a8a8;font-style:italic;">Missing value</div>
<div class="t" style="left:225.00px;top:426px;font-size:14.6px;color:#cccccc;font-style:normal;transform:scaleX(0.925);transform-origin:0 0;">$600.00</div>
<div class="t" style="right:364.50px;top:426px;font-size:14.6px;color:#cccccc;font-style:normal;transform:scaleX(0.925);transform-origin:100% 0;">212</div>
<div class="t" style="right:124.50px;top:426px;font-size:14.6px;color:#cccccc;font-style:normal;transform:scaleX(0.925);transform-origin:100% 0;">1</div>
<div class="r" style="left:0.00px;top:446.00px;width:1048.00px;height:1.00px;background:#454545;"></div>
<div class="t" style="right:844.40px;top:454px;font-size:14px;color:#a8a8a8;font-style:italic;">Missing value</div>
<div class="t" style="left:225.00px;top:453px;font-size:14.6px;color:#cccccc;font-style:normal;transform:scaleX(0.925);transform-origin:0 0;">$450.00</div>
<div class="t" style="right:364.50px;top:453px;font-size:14.6px;color:#cccccc;font-style:normal;transform:scaleX(0.925);transform-origin:100% 0;">293</div>
<div class="t" style="right:124.50px;top:453px;font-size:14.6px;color:#cccccc;font-style:normal;transform:scaleX(0.925);transform-origin:100% 0;">8</div>
<div class="r" style="left:0.00px;top:472.00px;width:1048.00px;height:1.00px;background:#454545;"></div>
<div class="t" style="right:844.40px;top:480px;font-size:14px;color:#a8a8a8;font-style:italic;">Missing value</div>
<div class="t" style="left:225.00px;top:479px;font-size:14.6px;color:#cccccc;font-style:normal;transform:scaleX(0.925);transform-origin:0 0;">$150.00</div>
<div class="t" style="right:364.50px;top:479px;font-size:14.6px;color:#cccccc;font-style:normal;transform:scaleX(0.925);transform-origin:100% 0;">49</div>
<div class="t" style="right:124.50px;top:479px;font-size:14.6px;color:#cccccc;font-style:normal;transform:scaleX(0.925);transform-origin:100% 0;">0</div>
<div class="r" style="left:0.00px;top:499.00px;width:1048.00px;height:1.00px;background:#454545;"></div>
<div class="t" style="right:844.40px;top:506px;font-size:14px;color:#a8a8a8;font-style:italic;">Missing value</div>
<div class="t" style="left:225.00px;top:505px;font-size:14.6px;color:#cccccc;font-style:normal;transform:scaleX(0.925);transform-origin:0 0;">$45.00</div>
<div class="t" style="right:364.50px;top:505px;font-size:14.6px;color:#cccccc;font-style:normal;transform:scaleX(0.925);transform-origin:100% 0;">107</div>
<div class="t" style="right:124.50px;top:505px;font-size:14.6px;color:#cccccc;font-style:normal;transform:scaleX(0.925);transform-origin:100% 0;">80</div>
<div class="r" style="left:0.00px;top:525.00px;width:1048.00px;height:1.00px;background:#454545;"></div>
<div class="t" style="right:844.40px;top:533px;font-size:14px;color:#a8a8a8;font-style:italic;">Missing value</div>
<div class="t" style="left:225.00px;top:532px;font-size:14.6px;color:#cccccc;font-style:normal;transform:scaleX(0.925);transform-origin:0 0;">$300.00</div>
<div class="t" style="right:364.50px;top:532px;font-size:14.6px;color:#cccccc;font-style:normal;transform:scaleX(0.925);transform-origin:100% 0;">356</div>
<div class="t" style="right:124.50px;top:532px;font-size:14.6px;color:#cccccc;font-style:normal;transform:scaleX(0.925);transform-origin:100% 0;">6</div>
<div class="r" style="left:0.00px;top:551.00px;width:1048.00px;height:1.00px;background:#454545;"></div>
<div class="r" style="left:213.00px;top:0.00px;width:1.00px;height:540.00px;background:#454545;"></div>
<div class="r" style="left:453.00px;top:0.00px;width:1.00px;height:540.00px;background:#454545;"></div>
<div class="r" style="left:693.00px;top:0.00px;width:1.00px;height:540.00px;background:#454545;"></div>
<div class="r" style="left:933.00px;top:0.00px;width:1.00px;height:540.00px;background:#454545;"></div>
<div class="r" style="left:934.00px;top:182.00px;width:114.00px;height:27.00px;background:#04395e;border-top:1px solid #1a5c96;border-bottom:1px solid #1a5c96;box-sizing:border-box"></div>
</div>
</div>
<div class="r" style="left:1111px;top:792px;width:297px;height:12px;background:#4a4a4a;"></div>
<div class="r" style="left:464px;top:804px;width:1058px;height:1px;background:#3a3a3a;"></div>
</body></html>
